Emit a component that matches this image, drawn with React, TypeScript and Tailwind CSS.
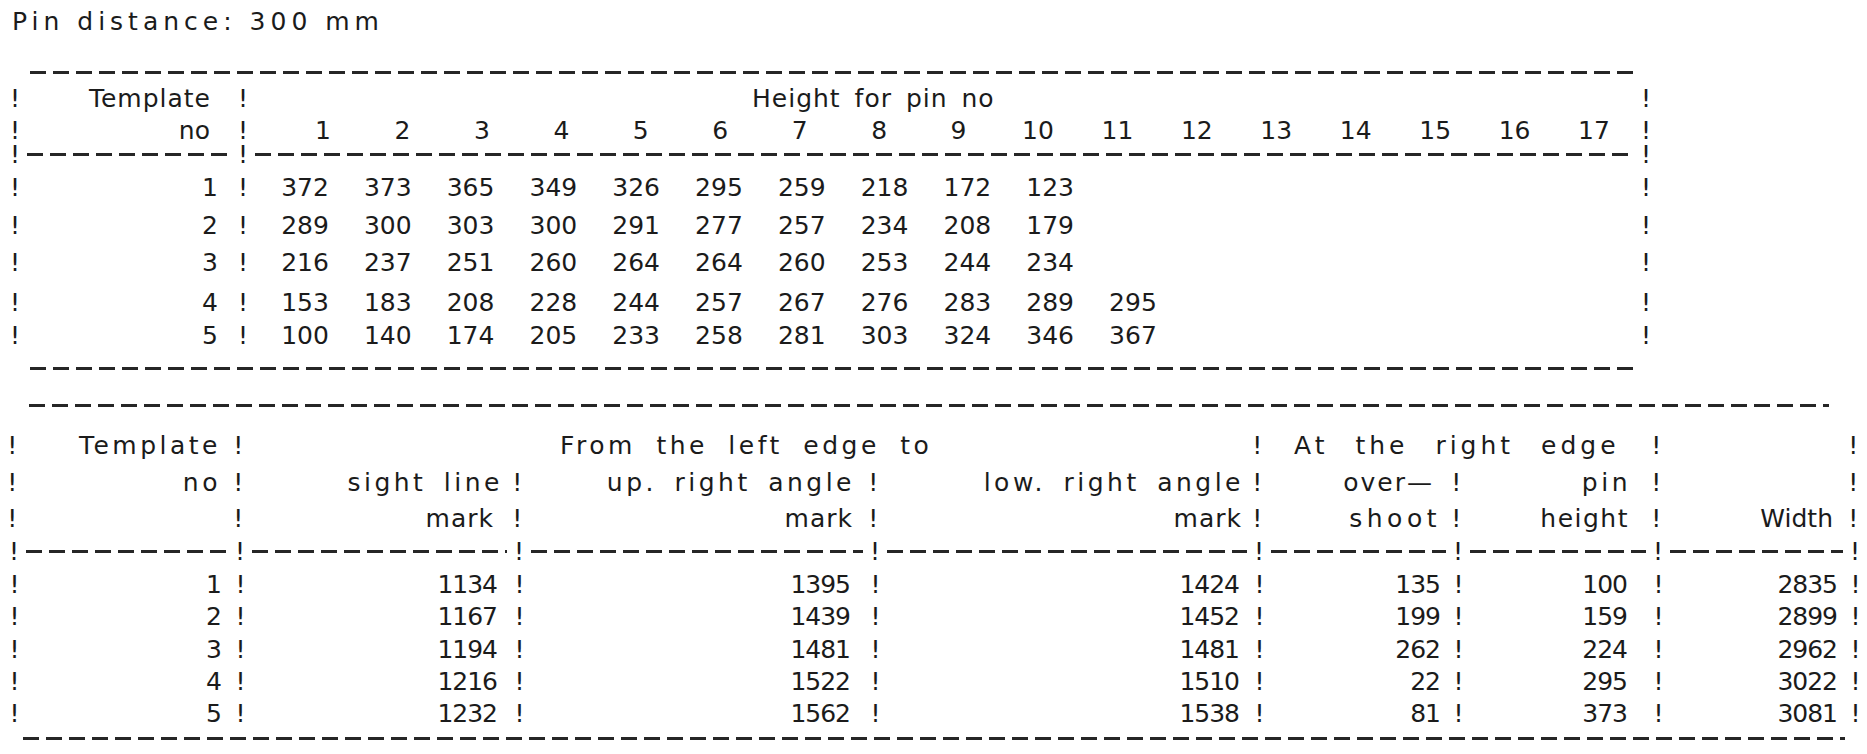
const DASH =
  "h-[3px] bg-[repeating-linear-gradient(90deg,#262626_0px,#262626_16px,transparent_16px,transparent_23px)]";

const pinHeights = [
  [372, 373, 365, 349, 326, 295, 259, 218, 172, 123],
  [289, 300, 303, 300, 291, 277, 257, 234, 208, 179],
  [216, 237, 251, 260, 264, 264, 260, 253, 244, 234],
  [153, 183, 208, 228, 244, 257, 267, 276, 283, 289, 295],
  [100, 140, 174, 205, 233, 258, 281, 303, 324, 346, 367],
];
const topRowMargins = ["mt-[13px]", "mt-[18px]", "mt-[17px]", "mt-[20px]", "mt-[13px]"];

const widths = [
  [1, 1134, 1395, 1424, 135, 100, 2835],
  [2, 1167, 1439, 1452, 199, 159, 2899],
  [3, 1194, 1481, 1481, 262, 224, 2962],
  [4, 1216, 1522, 1510, 22, 295, 3022],
  [5, 1232, 1562, 1538, 81, 373, 3081],
];
const bottomRowMargins = ["mt-[13px]", "mt-[12px]", "mt-[13px]", "mt-[12px]", "mt-[12px]"];

function Bang() {
  return <div className="w-[24px] shrink-0 text-center">!</div>;
}

function Row({ className, children }: { className?: string; children?: React.ReactNode }) {
  return <div className={`flex h-[20px] items-center leading-none ${className ?? ""}`}>{children}</div>;
}

function TopTable() {
  return (
    <div className="text-[25px]">
      <Row className="mt-[31px]">
        <div className={`${DASH} ml-[30px] w-[1606px]`} />
      </Row>
      <Row className="mt-[6px] ml-[3px]">
        <Bang />
        <div className="w-[204px] shrink-0 pr-[20px] text-right tracking-[1px]">Template</div>
        <Bang />
        <div className="w-[1379px] shrink-0 pl-[497px] tracking-[1px] [word-spacing:5px]">Height for pin no</div>
        <Bang />
      </Row>
      <Row className="mt-[12px] ml-[3px]">
        <Bang />
        <div className="w-[204px] shrink-0 pr-[21px] text-right">no</div>
        <Bang />
        <div className="grid w-[1379px] shrink-0 grid-cols-[repeat(17,79.44px)] pl-[28.3px]">
          {Array.from({ length: 17 }, (_, i) => (
            <div key={i} className="text-center">
              {i + 1}
            </div>
          ))}
        </div>
        <Bang />
      </Row>
      <Row className="mt-[4px] ml-[3px]">
        <Bang />
        <div className={`${DASH} w-[204px] shrink-0`} />
        <Bang />
        <div className={`${DASH} w-[1379px] shrink-0`} />
        <Bang />
      </Row>
      {pinHeights.map((row, r) => (
        <Row key={r} className={`${topRowMargins[r]} ml-[3px]`}>
          <Bang />
          <div className="w-[204px] shrink-0 pr-[13px] text-right">{r + 1}</div>
          <Bang />
          <div className="grid w-[1379px] shrink-0 grid-cols-[repeat(11,82.8px)] pl-[8.6px]">
            {row.map((v, i) => (
              <div key={i} className="text-center">
                {v}
              </div>
            ))}
          </div>
          <Bang />
        </Row>
      ))}
      <Row className="mt-[13px]">
        <div className={`${DASH} ml-[30px] w-[1606px]`} />
      </Row>
    </div>
  );
}

function Cell({ w, pr, className, children }: { w: string; pr: string; className?: string; children?: React.ReactNode }) {
  return <div className={`${w} ${pr} shrink-0 text-right ${className ?? ""}`}>{children}</div>;
}

function BottomTable() {
  return (
    <div className="text-[25px]">
      <Row className="mt-[17px]">
        <div className={`${DASH} ml-[29px] w-[1800px]`} />
      </Row>
      <div className="tracking-[3.5px] [word-spacing:6px]">
        <Row className="mt-[20px] ml-[2px]">
          <Bang />
          <Cell w="w-[202px]" pr="pr-[7px]">Template</Cell>
          <Bang />
          <div className="w-[995px] shrink-0 pl-[308px] [word-spacing:9px]">From the left edge to</div>
          <Bang />
          <div className="w-[375px] shrink-0 pl-[23px] tracking-[4px] [word-spacing:15px]">At the right edge</div>
          <Bang />
          <div className="w-[173px] shrink-0" />
          <Bang />
        </Row>
        <Row className="mt-[17px] ml-[2px]">
          <Bang />
          <Cell w="w-[202px]" pr="pr-[7px]">no</Cell>
          <Bang />
          <Cell w="w-[255px]" pr="pr-[4px]">sight line</Cell>
          <Bang />
          <Cell w="w-[332px]" pr="pr-[8px]">up. right angle</Cell>
          <Bang />
          <Cell w="w-[360px]" pr="pr-[3px]">low. right angle</Cell>
          <Bang />
          <Cell w="w-[175px]" pr="pr-[12px]" className="tracking-[2px]">over—</Cell>
          <Bang />
          <Cell w="w-[176px]" pr="pr-[15px]">pin</Cell>
          <Bang />
          <Cell w="w-[173px]" pr="pr-[7px]" />
          <Bang />
        </Row>
        <Row className="mt-[16px] ml-[2px]">
          <Bang />
          <Cell w="w-[202px]" pr="pr-[7px]" />
          <Bang />
          <Cell w="w-[255px]" pr="pr-[13px]" className="tracking-[1px]">mark</Cell>
          <Bang />
          <Cell w="w-[332px]" pr="pr-[10px]" className="tracking-[1px]">mark</Cell>
          <Bang />
          <Cell w="w-[360px]" pr="pr-[5px]" className="tracking-[1px]">mark</Cell>
          <Bang />
          <Cell w="w-[175px]" pr="pr-[5px]" className="tracking-[4.5px]">shoot</Cell>
          <Bang />
          <Cell w="w-[176px]" pr="pr-[17px]" className="tracking-[1.5px]">height</Cell>
          <Bang />
          <Cell w="w-[173px]" pr="pr-[10px]" className="tracking-[0px]">Width</Cell>
          <Bang />
        </Row>
      </div>
      <Row className="mt-[13px] ml-[2px]">
        <Bang />
        <div className={`${DASH} w-[202px] shrink-0`} />
        <Bang />
        <div className={`${DASH} w-[255px] shrink-0`} />
        <Bang />
        <div className={`${DASH} w-[332px] shrink-0`} />
        <Bang />
        <div className={`${DASH} w-[360px] shrink-0`} />
        <Bang />
        <div className={`${DASH} w-[175px] shrink-0`} />
        <Bang />
        <div className={`${DASH} w-[176px] shrink-0`} />
        <Bang />
        <div className={`${DASH} w-[173px] shrink-0`} />
        <Bang />
      </Row>
      {widths.map((row, r) => (
        <Row key={r} className={`${bottomRowMargins[r]} ml-[2px] tracking-[-1px]`}>
          <Bang />
          <Cell w="w-[202px]" pr="pr-[7px]">{row[0]}</Cell>
          <Bang />
          <Cell w="w-[255px]" pr="pr-[10px]">{row[1]}</Cell>
          <Bang />
          <Cell w="w-[332px]" pr="pr-[13px]">{row[2]}</Cell>
          <Bang />
          <Cell w="w-[360px]" pr="pr-[8px]">{row[3]}</Cell>
          <Bang />
          <Cell w="w-[175px]" pr="pr-[6px]">{row[4]}</Cell>
          <Bang />
          <Cell w="w-[176px]" pr="pr-[19px]">{row[5]}</Cell>
          <Bang />
          <Cell w="w-[173px]" pr="pr-[6px]">{row[6]}</Cell>
          <Bang />
        </Row>
      ))}
      <Row className="mt-[5px]">
        <div className={`${DASH} ml-[23px] w-[1822px]`} />
      </Row>
    </div>
  );
}

export default function App() {
  return (
    <div className="h-[754px] w-[1867px] overflow-hidden bg-white pt-[11px] font-['DejaVu_Sans',sans-serif] text-[#1b1b1b]">
      <Row className="pl-[12px] text-[25px] tracking-[5px]">Pin distance: 300 mm</Row>
      <TopTable />
      <BottomTable />
    </div>
  );
}
